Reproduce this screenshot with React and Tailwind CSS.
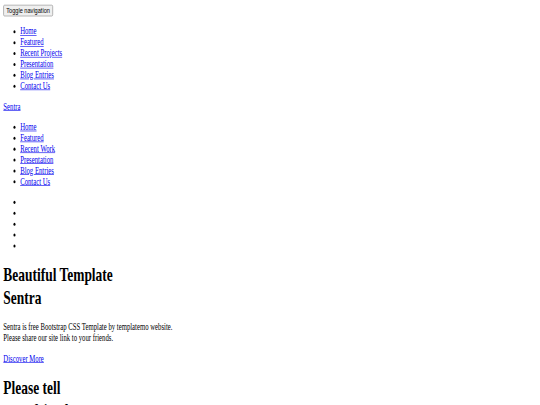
export default function App() {
  const link = "text-[#0000ee] underline";
  const nav1 = ["Home", "Featured", "Recent Projects", "Presentation", "Blog Entries", "Contact Us"];
  const nav2 = ["Home", "Featured", "Recent Work", "Presentation", "Blog Entries", "Contact Us"];
  return (
    <div className="w-[540px] h-[405px] overflow-hidden bg-white">
      <div className="w-[1286px] origin-top-left scale-x-[0.42] scale-y-[0.605] font-['Liberation_Serif',serif] text-[16px] leading-[normal] text-black">
        <div className="p-[8px]">
          <button className="bg-[#efefef] border border-[#767676] rounded-[3px] px-[6px] py-[1px] text-[13.333px] font-['Liberation_Sans',sans-serif] text-black">
            Toggle navigation
          </button>
          <ul className="list-disc pl-[40px] my-[16px]">
            {nav1.map((t) => (
              <li key={t}>
                <a href="#" className={link}>{t}</a>
              </li>
            ))}
          </ul>
          <a href="#" className={link}>Sentra</a>
          <ul className="list-disc pl-[40px] my-[16px]">
            {nav2.map((t) => (
              <li key={t}>
                <a href="#" className={link}>{t}</a>
              </li>
            ))}
          </ul>
          <ul className="list-disc pl-[40px] my-[16px]">
            {[0, 1, 2, 3, 4].map((i) => (
              <li key={i}>&#8203;</li>
            ))}
          </ul>
          <h1 className="text-[32px] font-bold my-[21.44px]">
            Beautiful Template
            <br />
            Sentra
          </h1>
          <p className="my-[16px]">
            Sentra is free Bootstrap CSS Template by templatemo website.
            <br />
            Please share our site link to your friends.
          </p>
          <p className="my-[16px]">
            <a href="#" className={link}>Discover More</a>
          </p>
          <h1 className="text-[32px] font-bold my-[21.44px]">
            Please tell
            <br />
            your friends
          </h1>
        </div>
      </div>
    </div>
  );
}
